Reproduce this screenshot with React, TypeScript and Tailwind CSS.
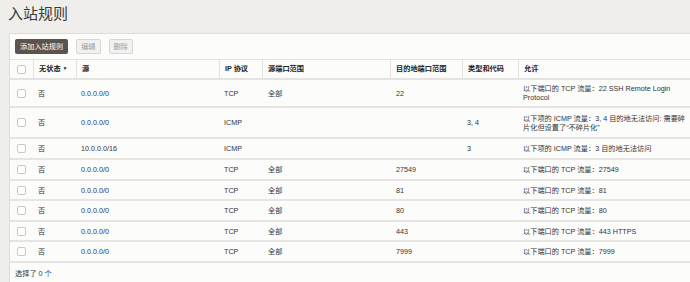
const FONT = "font-['Liberation_Sans','Noto_Sans_CJK_SC',sans-serif]";
const COLS = "grid grid-cols-[23px_43px_143px_43px_128px_72px_56px_1fr]";

type Rule = {
  src: string;
  link?: boolean;
  proto: string;
  srcPort: string;
  dstPort: string;
  code: string;
  allow: string[];
  h: string;
};

const RULES: Rule[] = [
  { src: "0.0.0.0/0", link: true, proto: "TCP", srcPort: "全部", dstPort: "22", code: "", allow: ["以下端口的 TCP 流量：22 SSH Remote Login", "Protocol"], h: "h-[28px]" },
  { src: "0.0.0.0/0", link: true, proto: "ICMP", srcPort: "", dstPort: "", code: "3, 4", allow: ["以下项的 ICMP 流量：3, 4 目的地无法访问: 需要碎", "片化但设置了“不碎片化”"], h: "h-[31px]" },
  { src: "10.0.0.0/16", proto: "ICMP", srcPort: "", dstPort: "", code: "3", allow: ["以下项的 ICMP 流量：3 目的地无法访问"], h: "h-[21px]" },
  { src: "0.0.0.0/0", link: true, proto: "TCP", srcPort: "全部", dstPort: "27549", code: "", allow: ["以下端口的 TCP 流量：27549"], h: "h-[21px]" },
  { src: "0.0.0.0/0", link: true, proto: "TCP", srcPort: "全部", dstPort: "81", code: "", allow: ["以下端口的 TCP 流量：81"], h: "h-[20px]" },
  { src: "0.0.0.0/0", link: true, proto: "TCP", srcPort: "全部", dstPort: "80", code: "", allow: ["以下端口的 TCP 流量：80"], h: "h-[21px]" },
  { src: "0.0.0.0/0", link: true, proto: "TCP", srcPort: "全部", dstPort: "443", code: "", allow: ["以下端口的 TCP 流量：443 HTTPS"], h: "h-[20px]" },
  { src: "0.0.0.0/0", link: true, proto: "TCP", srcPort: "全部", dstPort: "7999", code: "", allow: ["以下端口的 TCP 流量：7999"], h: "h-[21px]" },
];

export default function App() {
  return (
    <div className={`${FONT} h-[282px] w-[690px] overflow-hidden bg-[#efeeeb] text-[#333]`}>
      <h1 className="h-[33px] pl-[8px] pt-[4px] text-[15px] leading-[20px] font-normal text-[#3a3a3a]">入站规则</h1>

      <div className="ml-[9px] border-l border-t border-[#e0ddd8] bg-[#fcfcfb] text-[7.2px]">
        <div className="flex items-center gap-[8px] px-[5px] pt-[5px] pb-[5px]">
          <button className="h-[15px] rounded-[2px] bg-[#5c534e] px-[5px] text-[7.2px] leading-[15px] text-white">
            添加入站规则
          </button>
          <button className="h-[15px] rounded-[2px] border border-[#d8d6d3] bg-[#f2f1ef] px-[4px] text-[7.2px] leading-[13px] text-[#a0a0a0]">
            编辑
          </button>
          <button className="h-[15px] rounded-[2px] border border-[#d8d6d3] bg-[#f2f1ef] px-[4px] text-[7.2px] leading-[13px] text-[#a0a0a0]">
            删除
          </button>
        </div>

        <div className={`${COLS} h-[21px] border-t border-b-2 border-[#e4e3e1] font-bold text-[#222]`}>
          <div className="flex items-center justify-center">
            <Box />
          </div>
          <Head>
            无状态 <span className="ml-[2px] text-[5px]">▼</span>
          </Head>
          <Head>源</Head>
          <Head>IP 协议</Head>
          <Head>源端口范围</Head>
          <Head>目的地端口范围</Head>
          <Head>类型和代码</Head>
          <Head>允许</Head>
        </div>

        {RULES.map((r, i) => (
          <div key={i} className={`${COLS} ${r.h} border-b-2 border-[#e6e5e3] leading-[9px]`}>
            <div className="flex items-center justify-center">
              <Box />
            </div>
            <Cell>否</Cell>
            <Cell>
              <span className={r.link ? "text-[#1e3a66]" : "text-[#333]"}>{r.src}</span>
            </Cell>
            <Cell>{r.proto}</Cell>
            <Cell className="pl-[6px]">{r.srcPort}</Cell>
            <Cell className="pl-[6px]">{r.dstPort}</Cell>
            <Cell>{r.code}</Cell>
            <Cell>
              <div className="flex flex-col whitespace-nowrap">
                {r.allow.map((l, j) => (
                  <span key={j}>{l}</span>
                ))}
              </div>
            </Cell>
          </div>
        ))}

        <div className="h-[19px] pl-[5px] pt-[6px] leading-[9px]">
          选择了 <span className="text-[#1e3a66]">0 个</span>
        </div>
      </div>
    </div>
  );
}

function Head({ children }: { children: React.ReactNode }) {
  return (
    <div className="flex items-center whitespace-nowrap border-l border-[#e2e1df] pl-[5px]">{children}</div>
  );
}

function Cell({ children, className = "" }: { children?: React.ReactNode; className?: string }) {
  return <div className={`flex items-center whitespace-nowrap pl-[5px] ${className}`}>{children}</div>;
}

function Box() {
  return <span className="inline-block h-[9px] w-[9px] rounded-[2px] border border-[#c9c8c6] bg-white" />;
}
